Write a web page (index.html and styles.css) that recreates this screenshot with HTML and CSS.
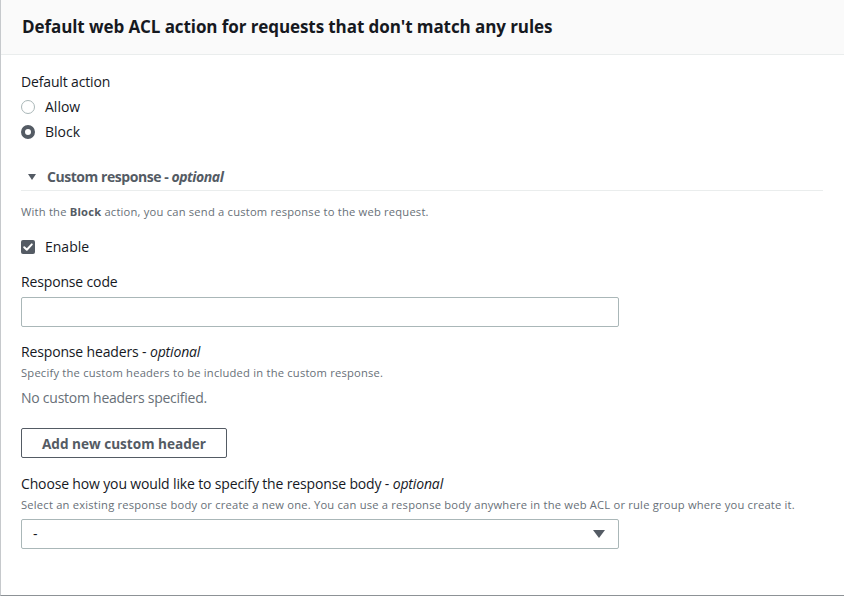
FILE: index.html
```html
<!DOCTYPE html>
<html>
<head>
<meta charset="utf-8">
<link rel="stylesheet" href="styles.css">
</head>
<body>
<div class="card">
  <div class="card-header">
    <h2 class="title">Default web ACL action for requests that don't match any rules</h2>
  </div>
  <div class="card-body">
    <div class="label">Default action</div>
    <div class="radio-group">
      <div class="radio-row"><span class="radio"></span><span>Allow</span></div>
      <div class="radio-row"><span class="radio checked"></span><span>Block</span></div>
    </div>

    <div class="expand-header">
      <svg class="caret" width="10" height="8" viewBox="0 0 10 8"><path d="M1 1h8L5 7z" fill="#545b64"/></svg>
      <span class="expand-title">Custom response - <i>optional</i></span>
    </div>
    <div class="desc first">With the <b>Block</b> action, you can send a custom response to the web request.</div>

    <div class="check-row">
      <span class="checkbox"><svg width="14" height="14" viewBox="0 0 14 14"><path d="M3.2 7.2l2.6 2.6 5-5.4" fill="none" stroke="#fff" stroke-width="2" stroke-linecap="round" stroke-linejoin="round"/></svg></span>
      <span>Enable</span>
    </div>

    <div class="label field-label">Response code</div>
    <div class="input"></div>

    <div class="label field-label2">Response headers - <i>optional</i></div>
    <div class="desc">Specify the custom headers to be included in the custom response.</div>
    <div class="empty">No custom headers specified.</div>

    <button class="btn">Add new custom header</button>

    <div class="label field-label3">Choose how you would like to specify the response body - <i>optional</i></div>
    <div class="desc">Select an existing response body or create a new one. You can use a response body anywhere in the web ACL or rule group where you create it.</div>
    <div class="select">
      <span>-</span>
      <svg width="12" height="8" viewBox="0 0 12 8"><path d="M0 0h12L6 8z" fill="#545b64"/></svg>
    </div>
  </div>
</div>
</body>
</html>
```

FILE: styles.css
```css
* { box-sizing: border-box; }
html, body { margin: 0; padding: 0; background: #fff; overflow: hidden; }
body {
  font-family: "Open Sans", "Noto Sans", sans-serif;
  font-size: 14px;
  line-height: 22px;
  color: #16191f;
}
.card {
  width: 846px;
  margin-top: -2px;
  border-left: 1px solid #c6c9cc;
  border-bottom: 1px solid #8d9296;
  box-shadow: 0 1px 2px rgba(0, 28, 36, 0.25);
  background: #fff;
}
.card-header {
  height: 57px;
  padding: 2px 21px 0;
  background: #fafafa;
  border-bottom: 1px solid #eaeded;
  display: flex;
  align-items: center;
}
.title {
  margin: 0;
  font-size: 17.05px;
  font-weight: 700;
  line-height: 22px;
  color: #16191f;
  letter-spacing: -0.1px;
}
.card-body {
  padding: 16px 21px 46px 20px;
}
.label { letter-spacing: -0.15px; }
.radio-group { margin-top: 1px; }
.radio-row {
  height: 25px;
  display: flex;
  align-items: center;
  gap: 10px;
}
.radio {
  width: 14px;
  height: 14px;
  border-radius: 50%;
  border: 1px solid #aab7b8;
  background: #fff;
  flex: none;
}
.radio.checked {
  border: 4.5px solid #545b64;
}
.expand-header {
  margin-top: 19px;
  height: 28px;
  display: flex;
  align-items: center;
  border-bottom: 1px solid #eaeded;
  padding-left: 6px;
  width: 802px;
}
.caret { margin-right: 10px; }
.expand-title {
  font-weight: 700;
  color: #545b64;
  letter-spacing: -0.45px;
}
.desc {
  font-size: 11.2px;
  line-height: 16px;
  color: #687078;
  margin-top: 2px;
  letter-spacing: 0.2px;
}
.desc.first { margin-top: 13px; }
.desc b { color: #545b64; }
.check-row {
  margin-top: 16px;
  display: flex;
  align-items: center;
  gap: 10px;
  height: 22px;
}
.checkbox {
  width: 14px;
  height: 14px;
  border-radius: 2px;
  background: #545b64;
  display: block;
  flex: none;
}
.checkbox svg { display: block; }
.field-label { margin-top: 13px; }
.field-label2 { margin-top: 14px; }
.field-label3 { margin-top: 15px; }
.input {
  margin-top: 4px;
  width: 598px;
  height: 30px;
  border: 1px solid #aab7b8;
  border-radius: 2px;
  background: #fff;
}
.empty {
  margin-top: 6px;
  color: #687078;
  letter-spacing: -0.25px;
}
.btn {
  display: block;
  margin-top: 19px;
  width: 206px;
  height: 30px;
  padding: 0;
  border: 1px solid #545b64;
  border-radius: 2px;
  background: #fff;
  color: #545b64;
  font-family: inherit;
  font-size: 13.6px;
  font-weight: 700;
}
.select {
  margin-top: 6px;
  width: 598px;
  height: 30px;
  border: 1px solid #aab7b8;
  border-radius: 2px;
  display: flex;
  align-items: center;
  justify-content: space-between;
  padding: 0 13px 0 11px;
}
```
